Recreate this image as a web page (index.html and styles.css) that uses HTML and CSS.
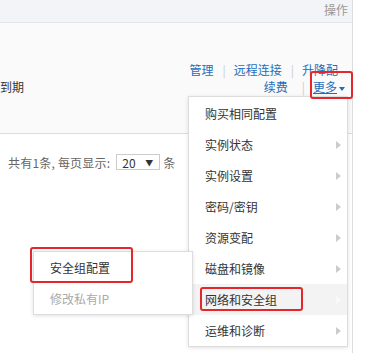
FILE: index.html
```html
<!DOCTYPE html>
<html lang="zh-CN">

<head>
    <meta charset="UTF-8">
    <meta name="viewport" content="width=device-width, initial-scale=1.0">
    <title>实例列表</title>
    <link rel="stylesheet" href="styles.css">
</head>

<body>
    <main class="page">
        <div class="list">
            <div class="thead">
                <span class="th-op">操作</span>
            </div>
            <div class="row">
                <div class="cell-expire">到期</div>
                <div class="ops">
                    <div class="ops-line first">
                        <a href="#">管理</a><span class="sep">|</span><a href="#">远程连接</a><span class="sep">|</span><a href="#">升降配</a>
                    </div>
                    <div class="ops-line second">
                        <a href="#">续费</a><span class="sep">|</span><a href="#" class="more">更多</a><i class="caret"></i>
                    </div>
                </div>
            </div>
            <div class="pager">
                <span>共有1条, 每页显示:</span>
                <span class="select"><span>20</span><span class="select-arrow">▼</span></span>
                <span>条</span>
            </div>
        </div>

        <ul class="menu">
            <li class="menu-item">购买相同配置</li>
            <li class="menu-item">实例状态<i class="arrow"></i></li>
            <li class="menu-item">实例设置<i class="arrow"></i></li>
            <li class="menu-item">密码/密钥<i class="arrow"></i></li>
            <li class="menu-item">资源变配<i class="arrow"></i></li>
            <li class="menu-item">磁盘和镜像<i class="arrow"></i></li>
            <li class="menu-item active">网络和安全组<i class="arrow"></i></li>
            <li class="menu-item">运维和诊断<i class="arrow"></i></li>
        </ul>

        <ul class="submenu">
            <li class="menu-item">安全组配置</li>
            <li class="menu-item disabled">修改私有IP</li>
        </ul>

        <!-- red annotation boxes -->
        <div class="mark mark-more"></div>
        <div class="mark mark-net"></div>
        <div class="mark mark-sg"></div>
    </main>
</body>

</html>
```

FILE: styles.css
```css
* {
    padding: 0px;
    margin: 0px;
    box-sizing: border-box;
}

body {
    font-family: "Noto Sans CJK SC", "Liberation Sans", sans-serif;
    font-size: 12px;
    color: #333;
    background-color: #fff;
}

.page {
    position: relative;
    width: 365px;
    height: 353px;
    overflow: hidden;
}

.list {
    width: 353px;
    height: 353px;
    border-right: 1px solid #dcdcdc;
}

.thead {
    height: 23px;
    background-color: #f2f4f7;
    border-bottom: 1px solid #e2e5ea;
    display: flex;
    justify-content: flex-end;
    padding-right: 4px;
    line-height: 20px;
}

.th-op {
    color: #999;
}

.row {
    display: flex;
    justify-content: space-between;
    height: 111px;
    background-color: #fafafa;
    border-bottom: 1px solid #dcdcdc;
}

.cell-expire {
    padding-top: 55px;
    line-height: 17px;
}

.ops {
    padding-top: 38px;
    padding-right: 7px;
    text-align: right;
    line-height: 17px;
}

.ops-line.first {
    padding-right: 7px;
}

.ops a {
    color: #1f6eb8;
    text-decoration: none;
}

.ops a.more {
    text-decoration: underline;
}

.sep {
    color: #ccc;
    margin: 0 8px 0 9px;
}

.ops-line.second .sep {
    margin-left: 14px;
}

.caret {
    display: inline-block;
    margin-left: 2px;
    vertical-align: middle;
    border-top: 4px solid #1f6eb8;
    border-left: 3px solid transparent;
    border-right: 3px solid transparent;
}

.pager {
    display: flex;
    align-items: center;
    padding: 18px 0 0 8px;
    height: 38px;
    color: #666;
}

.pager > span:first-child {
    letter-spacing: 0.2px;
}

.select {
    display: flex;
    justify-content: space-between;
    align-items: center;
    width: 44px;
    height: 16px;
    margin: 0 3px 0 6px;
    padding: 0 6px 0 5px;
    border: 1px solid #ccc;
    color: #333;
    background-color: #fff;
}

.select-arrow {
    font-size: 8px;
}

.menu,
.submenu {
    position: absolute;
    list-style: none;
    background-color: #fff;
    border: 1px solid #ddd;
    box-shadow: 0 1px 4px rgba(0, 0, 0, 0.12);
}

.menu {
    left: 188px;
    top: 96px;
    width: 160px;
    padding-top: 1px;
}

.submenu {
    left: 33px;
    top: 251px;
    width: 160px;
}

.menu-item {
    display: flex;
    align-items: center;
    height: 31px;
    padding: 0 6px 0 16px;
    color: #333;
}

.menu-item.active {
    background-color: #f3f3f3;
}

.menu-item.disabled {
    color: #aaa;
}

.arrow {
    margin-left: auto;
    border-left: 5px solid #ccc;
    border-top: 4px solid transparent;
    border-bottom: 4px solid transparent;
}

.active .arrow {
    border-left-color: #fafafa;
}

.mark {
    position: absolute;
    border: 2px solid #e5262b;
    border-radius: 3px;
}

.mark-more {
    left: 310px;
    top: 71px;
    width: 43px;
    height: 28px;
}

.mark-net {
    left: 200px;
    top: 287px;
    width: 103px;
    height: 24px;
}

.mark-sg {
    left: 30px;
    top: 247px;
    width: 103px;
    height: 36px;
}
```
